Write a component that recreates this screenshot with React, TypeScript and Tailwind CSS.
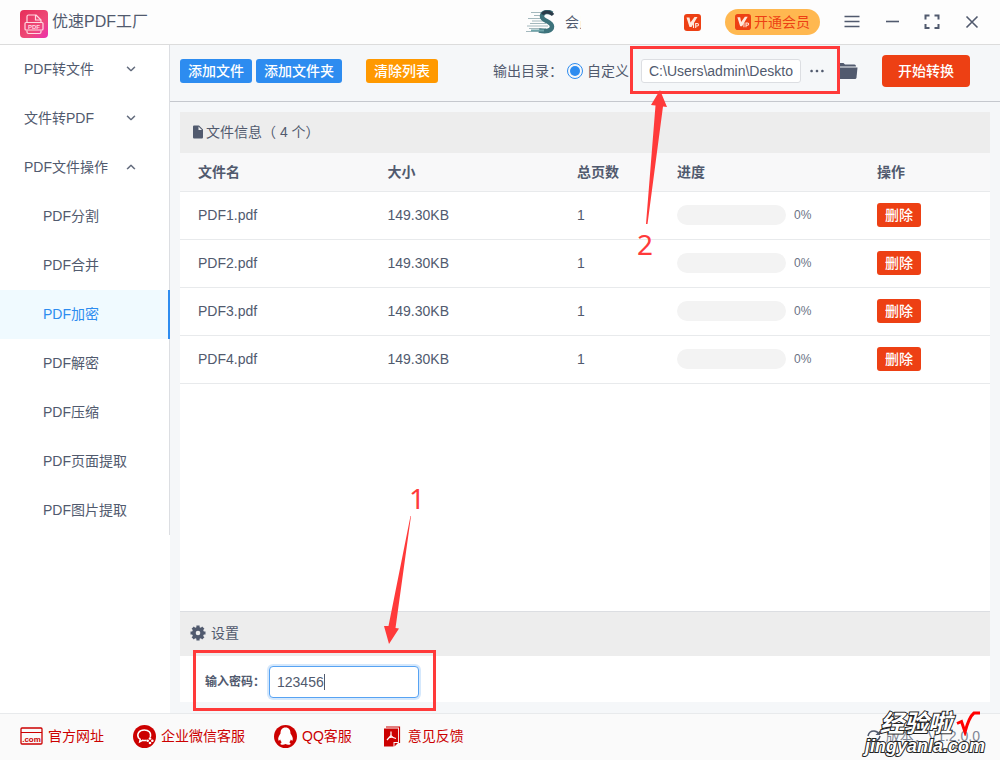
import type { ReactNode } from 'react'
import { useState } from 'react'
import { IoIosArrowDown, IoIosArrowUp, IoIosMore, IoMdDocument } from 'react-icons/io'

// 左侧菜单：前两组收起，PDF文件操作展开
const GROUPS: { label: string; open: boolean; items: string[] }[] = [
  { label: 'PDF转文件', open: false, items: [] },
  { label: '文件转PDF', open: false, items: [] },
  {
    label: 'PDF文件操作',
    open: true,
    items: ['PDF分割', 'PDF合并', 'PDF加密', 'PDF解密', 'PDF压缩', 'PDF页面提取', 'PDF图片提取'],
  },
]

const FILES = [
  { name: 'PDF1.pdf', size: '149.30KB', pages: 1, progress: 0 },
  { name: 'PDF2.pdf', size: '149.30KB', pages: 1, progress: 0 },
  { name: 'PDF3.pdf', size: '149.30KB', pages: 1, progress: 0 },
  { name: 'PDF4.pdf', size: '149.30KB', pages: 1, progress: 0 },
]

function LogoIcon() {
  return (
    <svg width="28" height="32" viewBox="0 0 28 32" aria-hidden="true">
      <defs>
        <linearGradient id="logo" x1="0" y1="0" x2="1" y2="1">
          <stop offset="0" stopColor="#e62e58" />
          <stop offset="0.6" stopColor="#ee4a78" />
          <stop offset="1" stopColor="#ec2fb0" />
        </linearGradient>
      </defs>
      <rect y="4" width="28" height="28" rx="4" fill="url(#logo)" />
      <g fill="none" stroke="#ffd9e2" strokeWidth="1.2" strokeLinejoin="round">
        <path d="M7 16V10.500Q7 9 8.500 9H16L21 14V16" />
        <path d="M15.500 9V14H21" />
        <rect x="5" y="16.500" width="18" height="7.500" rx="1" />
        <path d="M7 24.500V26Q7 27.500 8.500 27.500H19.500Q21 27.500 21 26V24.500" />
      </g>
      <text x="14" y="22.500" textAnchor="middle" fontSize="6" fontWeight="700" fill="#ffd9e2">PDF</text>
    </svg>
  )
}

function AvatarIcon() {
  return (
    <svg width="29" height="24" viewBox="0 0 29 24" fill="none" aria-hidden="true">
      <g stroke="#a3b8bd" strokeWidth="1">
        <path d="M5 2.500H20M8 5.500H17M2 8.500H16M6 11H18M4 13.500H20M1 16H22M3 18.500H20M0 21.500H18" />
      </g>
      <path d="M26 3.500C22 .5 16 2 16 6.500C16 11 26 11 26 16.500C26 21 20 22 13 20.500" stroke="#3d737c" strokeWidth="4.500" />
      <path d="M27 5C24 1 18 1 16.500 4.500" stroke="#2b3b49" strokeWidth="3" />
      <path d="M5 20.500H18" stroke="#6fa5aa" strokeWidth="2" />
    </svg>
  )
}

function VipIcon({ size }: { size: number }) {
  return (
    <svg width={size} height={size} viewBox="0 0 17 17" aria-hidden="true">
      <rect width="17" height="17" rx="3" fill="#ed4014" />
      <path d="M2.500 3.500H5.500L6.500 8.500L10.500 3H13.500L7.500 13H5.500Z" fill="#ffe9dd" />
      <path d="M9.500 9V14M11.700 14V9.500H13.200Q14.500 9.500 14.500 10.700T13.200 12H11.500" fill="none" stroke="#ffe9dd" strokeWidth="1.100" />
    </svg>
  )
}

function FolderIcon() {
  return (
    <svg width="20" height="18" viewBox="0 0 20 18" fill="#515a6e" aria-hidden="true">
      <path d="M0 3Q0 1 1.500 1H5.500L7 2.500H16.500Q18 2.500 18 4.500H0Z" />
      <path d="M0 5.500H19.500L18.500 15.500Q18.300 17 17 17H2Q.7 17 .5 15.500Z" />
    </svg>
  )
}

// 八齿齿轮，中间镂空
function GearIcon() {
  return (
    <svg width="16" height="16" viewBox="0 0 16 16" aria-hidden="true">
      <path d="M8 .5V15.500M.5 8H15.500M2.700 2.700L13.300 13.300M13.300 2.700L2.700 13.300" stroke="#515a6e" strokeWidth="3.200" />
      <circle cx="8" cy="8" r="6" fill="#515a6e" />
      <circle cx="8" cy="8" r="2.300" fill="#ededed" />
    </svg>
  )
}

function SiteIcon() {
  return (
    <svg width="23" height="18" viewBox="0 0 23 18" fill="none" stroke="#c00" aria-hidden="true">
      <rect x="1" y="1" width="21" height="16" rx="1" strokeWidth="1.300" />
      <path d="M1 5.500H22" />
      <text x="11.500" y="14.500" textAnchor="middle" fontSize="8" fontWeight="700" fill="#c00" stroke="none">.com</text>
    </svg>
  )
}

function WechatIcon() {
  return (
    <svg width="23" height="23" viewBox="0 0 23 23" fill="none" aria-hidden="true">
      <circle cx="11.500" cy="11.500" r="11.500" fill="#c00" />
      <path d="M17.300 12C18.500 7.500 15.500 5 11.300 5C6 5 3.500 9 5.500 12.800L7.200 14.300L6.700 16.800L9.500 15.300Q11.500 15.800 13.500 15.300" stroke="#fff" strokeWidth="1.500" />
      <g fill="#fff">
        <circle cx="17" cy="13.500" r="1.300" />
        <circle cx="17" cy="18" r="1.300" />
        <circle cx="14.700" cy="15.800" r="1.300" />
        <circle cx="19.300" cy="15.800" r="1.300" />
      </g>
    </svg>
  )
}

function QqIcon() {
  return (
    <svg width="23" height="23" viewBox="0 0 23 23" aria-hidden="true">
      <circle cx="11.500" cy="11.500" r="11.500" fill="#c00" />
      <path
        d="M11.500 2.500C8 2.500 6.500 5 6.500 8.500C5 10.500 3.500 13.500 4.500 15.500Q5.200 16 6.200 14.500Q6.500 16 7.700 17.200Q6 18 6.500 19.200Q9 20.500 11.500 19Q14 20.500 16.500 19.200Q17 18 15.300 17.200Q16.500 16 16.800 14.500Q17.800 16 18.500 15.500C19.500 13.500 18 10.500 16.500 8.500C16.500 5 15 2.500 11.500 2.500Z"
        fill="#fff"
      />
    </svg>
  )
}

function FeedbackIcon() {
  return (
    <svg width="17" height="21" viewBox="0 0 17 21" aria-hidden="true">
      <path d="M2 1H15.500V17" fill="none" stroke="#c00" strokeWidth="1.200" />
      <path d="M0 2.500H14V16H9.500V20.500H0Z" fill="#c00" />
      <path d="M10.500 17H14L10.500 20.500Z" fill="#c00" />
      <path d="M7 5.500V9.500L3 14M7 9.500Q8.500 12 12 12.500M4.500 12Q7 10.500 9.500 11.500" fill="none" stroke="#fff" strokeWidth="1.200" />
    </svg>
  )
}

function SyncIcon() {
  return (
    <svg width="14" height="14" viewBox="0 0 14 14" fill="none" stroke="#515a6e" strokeWidth="1.500" aria-hidden="true">
      <path d="M1 7Q2 2 7 2Q10 2 12 5M13 7Q12 12 7 12Q4 12 2 9" />
      <path d="M13 1.500V6H8.500Z" fill="#515a6e" stroke="none" />
    </svg>
  )
}

function WindowButton({ label, children }: { label: string; children: ReactNode }) {
  return (
    <button type="button" aria-label={label} className="size-4">
      <svg width="16" height="16" viewBox="0 0 16 16" fill="none" stroke="#515a6e" strokeWidth="1.6">
        {children}
      </svg>
    </button>
  )
}

function TitleBar() {
  return (
    <header className="flex h-[45px] items-center gap-1 border-b border-[#dcdcdc] bg-[#fdfdfd] px-5">
      <LogoIcon />
      <h1 className="text-base">优速PDF工厂</h1>
      <div className="ml-auto flex items-center gap-6">
        <div className="flex w-[134px] items-center gap-[10px]">
          <AvatarIcon />
          <span className="w-4 overflow-hidden whitespace-nowrap">会员</span>
        </div>
        <VipIcon size={17} />
        <button type="button" className="flex h-[26px] items-center gap-[3px] rounded-full bg-[#ffb850] px-[10px] text-[#ed4014]">
          <VipIcon size={16} />
          开通会员
        </button>
        <WindowButton label="菜单">
          <path d="M.5 2.500H15.500M.5 7.500H15.500M.5 12.500H15.500" />
        </WindowButton>
        <WindowButton label="最小化">
          <path d="M2 7.500H15" />
        </WindowButton>
        <WindowButton label="最大化">
          <path d="M1.500 5.500V1.500H5.500M10.500 1.500H14.500V5.500M14.500 10V14H10.500M5.500 14H1.500V10" strokeWidth="2" />
        </WindowButton>
        <WindowButton label="关闭">
          <path d="M2.500 2.500L13.500 13.500M13.500 2.500L2.500 13.500" />
        </WindowButton>
      </div>
    </header>
  )
}

function Sidebar({ active, onSelect }: { active: string; onSelect: (name: string) => void }) {
  return (
    <aside className="w-[170px] shrink-0 bg-white">
      <nav className="border-r border-[#dcdee2]">
        {GROUPS.map((group) => (
          <div key={group.label}>
            <button type="button" aria-expanded={group.open} className="flex h-[49px] w-full items-center justify-between pr-8 pb-0.5 pl-6">
              {group.label}
              {group.open ? <IoIosArrowUp size={12} strokeWidth={16} stroke="currentColor" /> : <IoIosArrowDown size={12} strokeWidth={16} stroke="currentColor" />}
            </button>
            {group.items.map((item) => (
              <a
                key={item}
                href="#"
                onClick={() => onSelect(item)}
                className={
                  item === active
                    ? '-mr-px flex h-[49px] items-center border-r-2 border-[#2d8cf0] bg-[#f0faff] pb-0.5 pl-[43px] text-[#2d8cf0]'
                    : 'flex h-[49px] items-center pb-0.5 pl-[43px]'
                }
              >
                {item}
              </a>
            ))}
          </div>
        ))}
      </nav>
    </aside>
  )
}

function Toolbar() {
  const [path, setPath] = useState('C:\\Users\\admin\\Deskto')

  return (
    <div className="flex h-[57px] items-center gap-1 border-b border-[#c5c8ce] pr-[30px] pb-1 pl-[10px]">
      <button type="button" className="h-6 rounded-[3px] bg-[#2d8cf0] px-2 font-medium text-white">添加文件</button>
      <button type="button" className="h-6 rounded-[3px] bg-[#2d8cf0] px-2 font-medium text-white">添加文件夹</button>
      <button type="button" className="ml-5 h-6 rounded-[3px] bg-[#ff9900] px-2 font-medium text-white">清除列表</button>
      <div className="ml-auto flex items-center">
        <span>输出目录：</span>
        <label className="mr-3 ml-1 flex items-center gap-1">
          <input
            type="radio"
            name="output"
            defaultChecked
            className="size-4 appearance-none rounded-full border border-[#2d8cf0] bg-white bg-clip-content p-[2px] checked:bg-[#2d8cf0]"
          />
          自定义
        </label>
        <div className="relative mr-[14px] flex items-center gap-2">
          <input
            type="text"
            aria-label="输出目录"
            value={path}
            onChange={(event) => setPath(event.target.value)}
            className="h-6 w-40 rounded-[3px] border border-[#dcdee2] bg-white px-[7px]"
          />
          <button type="button" aria-label="浏览" className="w-[15px]">
            <IoIosMore size={18} className="-mx-px" />
          </button>
          <div className="pointer-events-none absolute -top-[13px] -right-4 -bottom-[11px] -left-[11px] z-10 border-3 border-[#ff3a3a]" />
          <svg className="pointer-events-none absolute top-[29px] left-0 z-10" width="30" height="140" viewBox="0 0 30 140" aria-hidden="true">
            <path d="M19 2L26 19L22 18.500L6.500 136L5 136L14.500 17.500L10 17Z" fill="#ff3a3a" />
          </svg>
          <span className="absolute top-[171px] -left-1 z-10 font-['Noto_Sans'] text-[28px]/7 text-[#ff3a3a]">2</span>
        </div>
        <button type="button" aria-label="打开目录">
          <FolderIcon />
        </button>
        <button type="button" className="ml-6 h-8 w-[88px] rounded-sm bg-[#ed4014] font-medium text-white">开始转换</button>
      </div>
    </div>
  )
}

function FileTable() {
  return (
    <table className="w-full table-fixed text-left">
      <colgroup>
        <col />
        <col />
        <col className="w-[100px]" />
        <col className="w-[200px]" />
        <col className="w-[131px]" />
      </colgroup>
      <thead>
        <tr className="h-[38px] border-b border-[#e8eaec] bg-[#f8f8f9]">
          {['文件名', '大小', '总页数', '进度', '操作'].map((title) => (
            <th key={title} className="px-[18px] font-bold">{title}</th>
          ))}
        </tr>
      </thead>
      <tbody>
        {FILES.map((file) => (
          <tr key={file.name} className="h-12 border-b border-[#e8eaec]">
            <td className="px-[18px]">{file.name}</td>
            <td className="px-[18px]">{file.size}</td>
            <td className="px-[18px]">{file.pages}</td>
            <td className="px-[18px]">
              <div className="flex items-center gap-2 text-xs text-[#6b7385]">
                <div className="h-5 w-[109px] overflow-hidden rounded-full bg-[#f3f3f3]">
                  <div className="h-full bg-[#2d8cf0]" style={{ width: `${file.progress}%` }} />
                </div>
                {file.progress}%
              </div>
            </td>
            <td className="px-[18px]">
              <button type="button" className="block h-6 rounded-[3px] bg-[#ed4014] px-2 font-medium text-white">删除</button>
            </td>
          </tr>
        ))}
      </tbody>
    </table>
  )
}

function Settings() {
  const [password, setPassword] = useState('123456')

  return (
    <section className="border-t border-[#dcdee2] bg-white">
      <h2 className="flex h-11 items-center gap-[5px] bg-[#ededed] pb-0.5 pl-[10px]">
        <GearIcon />
        设置
      </h2>
      <div className="flex pt-[10px] pb-1 pl-[25px]">
        <div className="relative flex items-center gap-1">
          <label htmlFor="password" className="text-xs font-bold">输入密码：</label>
          <input
            id="password"
            type="text"
            value={password}
            onChange={(event) => setPassword(event.target.value)}
            className="h-8 w-[150px] rounded-sm border border-[#57a3f3] bg-white px-[7px] ring-2 ring-[#2d8cf0]/20 outline-none"
          />
          <span className="absolute top-2 left-[119px] h-4 w-px bg-[#515a6e]" />
          <div className="pointer-events-none absolute -top-4 -right-[17px] -bottom-[13px] -left-3 z-10 border-3 border-[#ff3a3a]" />
          <svg className="pointer-events-none absolute -top-[152px] left-[175px] z-10" width="35" height="132" viewBox="0 0 35 132" aria-hidden="true">
            <path d="M9 130L4 112L8.500 112L30.500 2L31 2L15.500 114L19 114.500Z" fill="#ff3a3a" />
          </svg>
          <span className="absolute -top-[182px] left-[204px] z-10 font-['Noto_Sans'] text-[28px]/7 text-[#ff3a3a]">1</span>
        </div>
      </div>
    </section>
  )
}

function Footer() {
  return (
    <footer className="relative flex h-[47px] items-center border-t border-[#e8eaec] bg-[#fafafa] px-5 pb-0.5 text-[#c00]">
      <a href="#" className="mr-[29px] flex items-center gap-[5px]">
        <SiteIcon />
        官方网址
      </a>
      <a href="#" className="mr-[29px] flex items-center gap-[5px]">
        <WechatIcon />
        企业微信客服
      </a>
      <a href="#" className="mr-8 flex items-center gap-[5px]">
        <QqIcon />
        QQ客服
      </a>
      <a href="#" className="flex items-center gap-[7px]">
        <FeedbackIcon />
        意见反馈
      </a>
      <div className="ml-auto flex items-center gap-[5px] text-[#808695]">
        <SyncIcon />
        版本：V1.2.0.0
      </div>
      {/* 右下角水印 */}
      <div className="pointer-events-none absolute right-[15px] bottom-1 z-10 text-right text-white italic">
        <div className="flex items-center justify-end gap-1 pr-1">
          <span className="text-2xl/6 font-bold [-webkit-text-stroke:2px_#222] [paint-order:stroke_fill]">经验啦</span>
          <svg width="25" height="25" viewBox="0 0 25 25" fill="none" aria-hidden="true">
            <path d="M1 12.500L5.500 10.500L9 21Q13 6 18 2H24" stroke="#f00" strokeWidth="3" />
          </svg>
        </div>
        <div className="text-lg/5 font-bold [-webkit-text-stroke:2px_#222] [paint-order:stroke_fill]">jingyanla.com</div>
      </div>
    </footer>
  )
}

export default function App() {
  const [active, setActive] = useState('PDF加密')

  return (
    <div className="flex min-h-screen flex-col overflow-hidden bg-[#f5f7f9] font-['Liberation_Sans','Noto_Sans_CJK_SC',sans-serif] text-sm text-[#515a6e]">
      <TitleBar />
      <div className="flex flex-1">
        <Sidebar active={active} onSelect={setActive} />
        <main className="flex min-w-0 flex-1 flex-col">
          <Toolbar />
          <div className="flex flex-1 flex-col px-[10px] pt-[10px] pb-[11px]">
            <section className="flex-1 bg-white">
              <h2 className="flex h-[41px] items-center bg-[#ededed] pb-0.5 pl-[10px]">
                <IoMdDocument size={16} />
                文件信息（ 4 个）
              </h2>
              <FileTable />
            </section>
            <Settings />
          </div>
        </main>
      </div>
      <Footer />
    </div>
  )
}
